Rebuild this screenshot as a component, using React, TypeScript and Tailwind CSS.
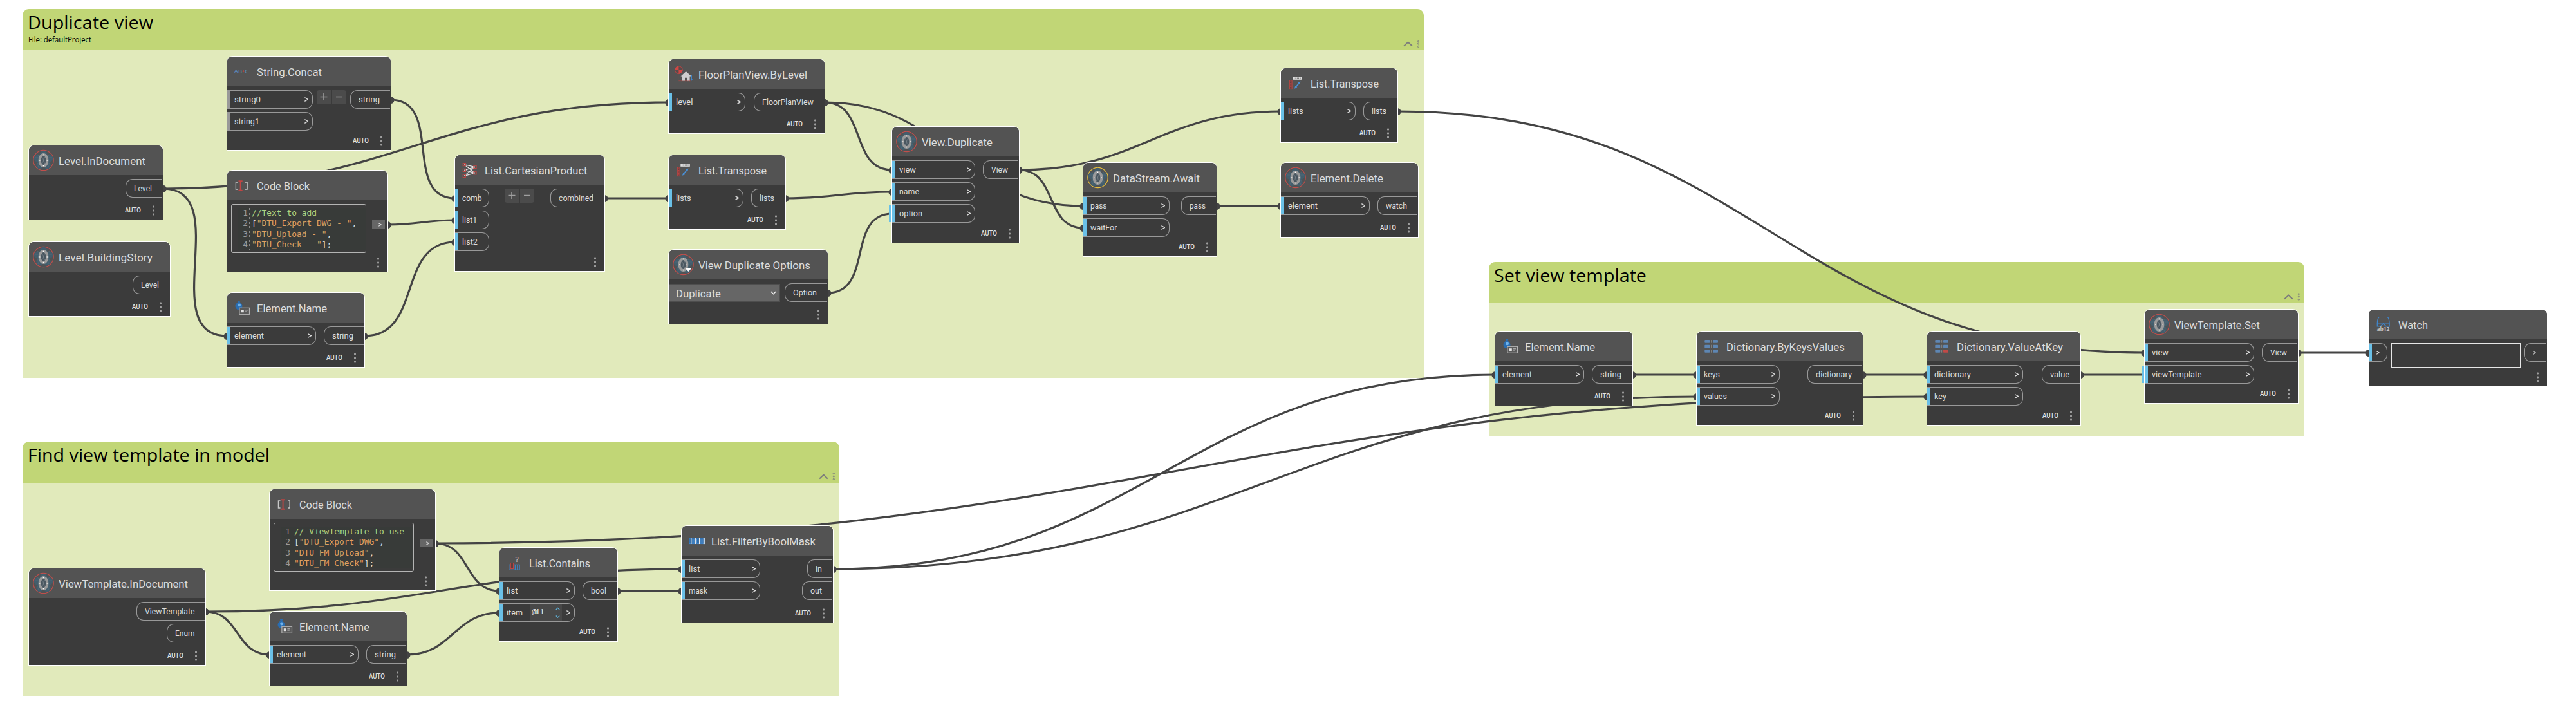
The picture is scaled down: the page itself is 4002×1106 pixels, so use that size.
import React, { useLayoutEffect, useRef, useState } from "react";

/** Single-line label stretched or squeezed to an exact width. */
function Fit({ w, className = "", children }: { w: number; className?: string; children: string }) {
  const ref = useRef<HTMLSpanElement>(null);
  const [scale, setScale] = useState(1);
  useLayoutEffect(() => {
    const el = ref.current;
    if (el && el.offsetWidth > 0) {
      const natural = el.getBoundingClientRect().width / scale;
      if (natural > 0) setScale(w / natural);
    }
  }, [w, children]);
  return (
    <span className={"block shrink-0 whitespace-nowrap " + className} style={{ width: w }}>
      <span ref={ref} className="inline-block origin-left whitespace-pre" style={{ transform: `scaleX(${scale})` }}>
        {children}
      </span>
    </span>
  );
}

/* ---------- icons ---------- */

type IconName =
  | "archi" | "archiYellow" | "archiDrop" | "abc" | "code" | "name" | "cartesian"
  | "floor" | "transpose" | "contains" | "filter" | "dict" | "dictKey" | "watch";

function Archi({ ring }: { ring: string }) {
  return (
    <>
      <circle cx="16.5" cy="16" r="15.7" fill="#505254" stroke={ring} strokeWidth="1.2" />
      {[0, 72, 144, 216, 288].map((a) => (
        <ellipse key={a} cx="16.5" cy="7.4" rx="5.8" ry="6.6" fill="#435e6d" transform={`rotate(${a} 16.5 16)`} />
      ))}
      <path d="M3 12h27M8 27l8-22 9 22M6 22l20-15M27 22L7 7" stroke="#5f7480" strokeWidth=".5" fill="none" />
      <ellipse cx="16.5" cy="16" rx="4" ry="7" fill="#4a5760" />
      <path d="M14 11q5 5 0 10M19 11q-5 5 0 10" stroke="#7f8a90" strokeWidth=".6" fill="none" />
      <ellipse cx="16.5" cy="16" rx="5.9" ry="9" fill="none" stroke="#9a9a9a" strokeWidth="4" />
      <circle cx="16.5" cy="7.4" r=".8" fill="#fff" />
      <circle cx="16.5" cy="24.6" r=".8" fill="#fff" />
      <circle cx="10.8" cy="16" r=".8" fill="#fff" />
      <circle cx="22.2" cy="16" r=".8" fill="#fff" />
    </>
  );
}

function Icon({ name }: { name: IconName }) {
  let body: React.ReactNode = null;
  switch (name) {
    case "archi":
      body = <Archi ring="#c14f4c" />;
      break;
    case "archiYellow":
      body = <Archi ring="#e8bf3e" />;
      break;
    case "archiDrop":
      body = (
        <>
          <Archi ring="#c14f4c" />
          <path d="M19 21h11l-5.5 6z" fill="#fff" />
        </>
      );
      break;
    case "abc":
      body = (
        <g fontFamily="'Open Sans', sans-serif" fontWeight="600" fontSize="9.5">
          <text x="4.8" y="19" textLength="12.2" lengthAdjust="spacingAndGlyphs" fill="#5a84b2">AB</text>
          <text x="21" y="19" textLength="6.5" lengthAdjust="spacingAndGlyphs" fill="#5a84b2">C</text>
          <path d="M17.4 15.6h3.4M19.1 13.9v3.4" stroke="#c04543" strokeWidth="1.2" />
        </g>
      );
      break;
    case "code":
      body = (
        <>
          <path d="M10.5 11H7.4v11h3.1M22 11h3.1v11H22" fill="none" stroke="#c9c9c9" strokeWidth="1.3" />
          <path d="M11.5 9.2h6.2M11.5 23.8h6.2M14.6 9.2v14.6" stroke="#c04543" strokeWidth="1.9" fill="none" />
        </>
      );
      break;
    case "name":
      body = (
        <>
          <path d="M9.8 5h4.6l-.8 1.6c.2 2 3.9 3.6 3.9 7 0 2.6-2 4.600-3.400 5.400h-4C8.600 18 6.500 16 6.500 13.400c0-3.200 3.600-4.600 4-6.800z" fill="#2a6db0" />
          <circle cx="12.6" cy="12" r="2.4" fill="#6fb2ea" />
          <rect x="12.9" y="16.3" width="15.6" height="10" fill="#5a5a5a" stroke="#b4b4b4" strokeWidth="1.2" />
          <rect x="15.8" y="19.2" width="4" height="4" fill="#e0e0e0" />
          <path d="M21.4 19.8h4.6M21.4 22h3.4" stroke="#d0d0d0" strokeWidth=".9" />
        </>
      );
      break;
    case "cartesian":
      body = (
        <>
          <path d="M8.3 7.7L25 11.3M8.3 7.7L25 20.7M8.3 16.3L25 11.3M8.3 16.3L25 20.7M8.3 25.3L25 11.3M8.3 25.3L25 20.7" stroke="#e2e2e2" strokeWidth="1.3" />
          <g fill="none" stroke="#c04543" strokeWidth="1">
            <rect x="6.2" y="5.5" width="4.2" height="4.2" />
            <rect x="6.2" y="14.3" width="4.2" height="4.2" />
            <rect x="6.2" y="23.2" width="4.2" height="4.2" />
            <rect x="22.9" y="9.3" width="4.2" height="4.2" />
            <rect x="22.9" y="18.7" width="4.2" height="4.2" />
          </g>
        </>
      );
      break;
    case "floor":
      body = (
        <>
          <circle cx="9.4" cy="9.7" r="5.9" fill="#5a4a4a" stroke="#c04543" strokeWidth="1" />
          <path d="M9.4 9.7V3.8A5.9 5.9 0 0 0 3.5 9.7zM9.4 9.7v5.9a5.9 5.9 0 0 0 5.9-5.9z" fill="#cf4744" />
          <path d="M8.6 16.5v10.2H28" fill="none" stroke="#c04543" strokeWidth="1" strokeDasharray="2 1" />
          <path d="M20.7 12l8.3 7.6h-2.4v6.8h-4v-4.600h-3.600v4.600h-4.200v-6.800h-2.300z" fill="#cfcfcf" />
          <path d="M29.3 17.5v7" stroke="#3f86cc" strokeWidth="1.3" />
          <path d="M27.3 23.5h4l-2 3.3z" fill="#3f86cc" />
        </>
      );
      break;
    case "transpose":
      body = (
        <>
          <rect x="12.3" y="6.3" width="14.5" height="4.5" fill="#dedede" />
          <path d="M14.7 7.5v2.1M17 7.5v2.1M19.3 7.5v2.1M21.6 7.5v2.1M24 7.5v2.1" stroke="#555" strokeWidth=".8" />
          <rect x="7.3" y="11.8" width="3.8" height="13.8" fill="#6a4040" stroke="#c04543" strokeWidth="1" />
          <path d="M8.3 14h2M8.3 16.500h2M8.3 19h2M8.3 21.500h2M8.3 23.800h2" stroke="#c04543" strokeWidth=".9" />
          <path d="M16.3 23.2L23 15" stroke="#4a8fd4" strokeWidth="1.8" />
          <path d="M24.4 13.6l-4.3 1.6 3.2 2.7zM15 24.7l4.4-1.7-3.2-2.7z" fill="#4a8fd4" />
        </>
      );
      break;
    case "contains":
      body = (
        <>
          <text x="18.4" y="14.6" fontFamily="Roboto, sans-serif" fontSize="11" fill="#cfcfcf">?</text>
          <path d="M8.8 19.3h16.3v8H8.8zM18.3 19v8.5M21.8 19v8.5" fill="none" stroke="#3f86cc" strokeWidth="1.2" />
          <rect x="11.3" y="16.5" width="4.3" height="9" fill="#5c4040" stroke="#c04543" strokeWidth="1.1" />
        </>
      );
      break;
    case "filter":
      body = (
        <>
          <rect x="5.8" y="11.8" width="23.6" height="8.8" fill="#2f6aa5" stroke="#3f86cc" strokeWidth="1" />
          <path d="M8.7 11.3v9.8M15.2 11.3v9.8M21.7 11.3v9.8" stroke="#e8e8e8" strokeWidth="1.5" />
          <rect x="27.8" y="11.3" width="1.9" height="9.8" fill="#f2f2f2" />
          <path d="M11 13v6M13 13v6M17.5 13v6M19.5 13v6M24 13v6M26 13v6" stroke="#5ba0e2" strokeWidth=".8" />
        </>
      );
      break;
    case "dict":
    case "dictKey":
      body = (
        <>
          {[6, 13.7, 21].map((y) => (
            <g key={y}>
              <rect x="6.3" y={y} width="8" height="4.7" rx="1" fill="#5e86b3" />
              <rect x="16.2" y={y} width="1" height="4.7" fill="#8a8a8a" />
              <rect x="19" y={y} width="8" height="4.7" rx="1" fill={name === "dictKey" && y === 21 ? "#c04a47" : "#5e86b3"} />
            </g>
          ))}
        </>
      );
      break;
    case "watch":
      body = (
        <>
          <path d="M10.2 4.5q-2.600 1.600-2.900 9.300h18.800q-.4-7.700-3-9.300M7.3 13.8v5h5.200l1.600-1.600 2.600-2.200 2.600 2.200 1.600 1.600h5.200v-5" fill="none" stroke="#3f86cc" strokeWidth="1.3" />
          <text x="6.4" y="26.4" textLength="20" lengthAdjust="spacingAndGlyphs" fontFamily="'Open Sans', sans-serif" fontWeight="700" fontSize="8.5" fill="#c4c4c4">ab12</text>
        </>
      );
      break;
  }
  return (
    <svg className="h-8 w-[33px] shrink-0 overflow-visible" viewBox="0 0 33 32">
      {body}
    </svg>
  );
}

/* ---------- node parts ---------- */

type Port = { label: string; w: number; tab?: boolean; idle?: boolean; spinner?: boolean };
type Out = { label: string; left: number };
type NodeData = {
  x: number; y: number; w: number; h: number;
  icon: IconName; title: string; tw: number;
  inW?: number; ins?: Port[]; outs?: Out[];
  auto?: boolean; plus?: number; arrows?: boolean; plain?: boolean;
  code?: { w: number; lines: { t: string; c: "g" | "o" | "w" }[][] };
  select?: boolean; watch?: boolean;
};

const Arrow = ({ small }: { small?: boolean }) => (
  <svg className={small ? "h-[6px] w-[5px]" : "h-[7px] w-[6px]"} viewBox="0 0 6 7">
    <path d="M.3.7L5.3 3.5.3 6.3" fill="none" stroke="#dcdcdc" strokeWidth="1.4" />
  </svg>
);

function InPort({ p, w, arrow }: { p: Port; w: number; arrow: boolean }) {
  return (
    <div
      className="relative flex h-[29px] items-center rounded-r-[11px] border-y border-r border-[#999999]"
      style={{ width: w }}
    >
      <div className={"h-[27px] w-[5px] shrink-0 " + (p.idle ? "bg-[#999999]" : "bg-[#6ac0e7]")} />
      {p.tab && <div className="absolute -left-[5px] top-0 h-[27px] w-1 bg-[#6ac0e7]" />}
      {p.label !== "" && (
        <Fit w={p.w} className="ml-[6px] text-[13px] leading-[16px] text-[#dcdcdc]">{p.label}</Fit>
      )}
      {p.spinner && (
        <div className="ml-[11px] flex h-[25px] w-[50px] items-center bg-[#484848]">
          <Fit w={19} className="ml-[3px] pb-[2px] text-[11px] font-medium leading-[14px] text-[#f0f0f0]">@L1</Fit>
          <div className="ml-auto h-6 w-px bg-[#777777]" />
          <svg className="h-6 w-3" viewBox="0 0 12 24">
            <path d="M2.8 7l2.700-2.700L8.200 7M2.800 16.500l2.700 2.700 2.700-2.700" fill="none" stroke="#5fb4dc" strokeWidth="1.2" />
          </svg>
        </div>
      )}
      {arrow && (
        <div className={p.label === "" ? "ml-[7px]" : "ml-auto mr-[6px]"}>
          <Arrow small={p.label === ""} />
        </div>
      )}
    </div>
  );
}

function OutPort({ o, w }: { o: Out; w: number }) {
  return (
    <div
      className="flex h-[29px] items-center self-end rounded-l-[11px] border-y border-l border-[#999999] pl-[12px]"
      style={{ width: w - o.left - 1 }}
    >
      {o.label === ">" ? (
        <div className="ml-[1px]"><Arrow small /></div>
      ) : (
        <Fit w={w - o.left - 30} className="text-[13px] leading-[16px] text-[#dcdcdc]">{o.label}</Fit>
      )}
    </div>
  );
}

function Code({ code }: { code: NonNullable<NodeData["code"]> }) {
  return (
    <div className="ml-[6px] flex">
      <div
        className="flex h-[76px] rounded-[3px] border border-[#b4b4b4] pl-[10px] pt-[5px] font-['DejaVu_Sans_Mono',monospace] text-[12.92px] leading-[16.3px]"
        style={{ width: code.w }}
      >
        <div className="flex h-[65px] grow bg-[#383b39]">
          <div className="w-[18px] border-r border-dotted border-[#8a8a8a] pr-[2px] text-right text-[#999999]">
            {code.lines.map((_, i) => (
              <div key={i}>{i + 1}</div>
            ))}
          </div>
          <div className="whitespace-pre pl-[3px]">
            {code.lines.map((l, i) => (
              <div key={i}>
                {l.map((s, j) => (
                  <span key={j} className={s.c === "g" ? "text-[#aed581]" : s.c === "o" ? "text-[#e0a060]" : "text-[#dcdcdc]"}>
                    {s.t}
                  </span>
                ))}
              </div>
            ))}
          </div>
        </div>
      </div>
      <div className="ml-[9px] mt-[25px] flex h-[13px] w-5 items-center justify-end bg-[#666666] pr-[5px]">
        <Arrow small />
      </div>
    </div>
  );
}

function Node({ n }: { n: NodeData }) {
  return (
    <div
      className={
        "absolute flex flex-col rounded-t-[8px] bg-[#3b3b3b] " + (n.plain ? "" : "shadow-[0_0_0_1px_#ffffff]")
      }
      style={{ left: n.x, top: n.y, width: n.w, height: n.h }}
    >
      <div className="flex h-[46px] shrink-0 items-center rounded-t-[8px] bg-[#535353] pl-[6px]">
        <Icon name={n.icon} />
        <Fit w={n.tw} className="ml-[7px] pt-[3px] text-[16px] leading-[20px] text-[#dcdcdc]">{n.title}</Fit>
      </div>
      <div className="mt-[6px] flex grow">
        {n.ins && (
          <div className="flex flex-col gap-[5px]">
            {n.ins.map((p) => (
              <InPort key={p.label} p={p} w={n.inW ?? 0} arrow={n.arrows !== false} />
            ))}
          </div>
        )}
        {n.code && <Code code={n.code} />}
        {n.select && (
          <div className="mt-[1px] flex h-7 w-[173px] items-center border-y border-r border-[#4e4e4e] bg-[#666666] pl-[11px] pr-[5px]">
            <Fit w={70} className="pt-[3px] text-[16px] leading-[20px] text-[#dcdcdc]">Duplicate</Fit>
            <svg className="ml-auto h-[6px] w-[9px]" viewBox="0 0 9 6">
              <path d="M.8 1l3.700 3.700L8.200 1" fill="none" stroke="#f0f0f0" strokeWidth="1.5" />
            </svg>
          </div>
        )}
        {n.plus !== undefined && (
          <div className="flex h-[22px] gap-[2px]" style={{ marginLeft: n.plus - (n.inW ?? 0) }}>
            <svg className="h-[22px] w-[22px] rounded-l-[4px] bg-[#4b4b4b]" viewBox="0 0 22 22">
              <path d="M5.5 10.5h11M11 5v11" stroke="#a0a0a0" strokeWidth="1.5" />
            </svg>
            <svg className="h-[22px] w-[22px] rounded-r-[4px] bg-[#4b4b4b]" viewBox="0 0 22 22">
              <path d="M6 10.5h9" stroke="#a0a0a0" strokeWidth="1.5" />
            </svg>
          </div>
        )}
        {n.watch && <div className="ml-[6px] h-[38px] w-[201px] border border-[#e6e6e6]" />}
        {n.outs && (
          <div className="ml-auto mr-px flex flex-col gap-[5px]">
            {n.outs.map((o) => (
              <OutPort key={o.label} o={o} w={n.w} />
            ))}
          </div>
        )}
      </div>
      <div className="mb-[6px] flex h-4 shrink-0 items-center justify-end pr-[13px]">
        {n.auto !== false && <Fit w={25} className="mr-[18px] text-[10.5px] font-medium leading-[14px] text-[#e2e2e2]">AUTO</Fit>}
        <svg className="h-4 w-[3px]" viewBox="0 0 3 16">
          <rect x="0" y=".5" width="3" height="3" rx="1" fill="#a0a0a0" />
          <rect x="0" y="6.5" width="3" height="3" rx="1" fill="#a0a0a0" />
          <rect x="0" y="12.5" width="3" height="3" rx="1" fill="#a0a0a0" />
        </svg>
      </div>
    </div>
  );
}

/* ---------- graph data ---------- */

const elementName = (x: number, y: number): NodeData => ({
  x, y, w: 213, h: 115, icon: "name", title: "Element.Name", tw: 109,
  inW: 138, ins: [{ label: "element", w: 46 }], outs: [{ label: "string", left: 150 }],
});

const transpose = (x: number, y: number): NodeData => ({
  x, y, w: 181, h: 115, icon: "transpose", title: "List.Transpose", tw: 106,
  inW: 116, ins: [{ label: "lists", w: 23.5 }], outs: [{ label: "lists", left: 128 }],
});

const nodes: NodeData[] = [
  { x: 45, y: 226, w: 208, h: 115, icon: "archi", title: "Level.InDocument", tw: 135, outs: [{ label: "Level", left: 150 }] },
  { x: 45, y: 376, w: 219, h: 115, icon: "archi", title: "Level.BuildingStory", tw: 146, outs: [{ label: "Level", left: 161 }] },
  {
    x: 353, y: 88, w: 254, h: 145, icon: "abc", title: "String.Concat", tw: 101, inW: 133, plus: 139,
    ins: [{ label: "string0", w: 41, idle: true }, { label: "string1", w: 39, idle: true }],
    outs: [{ label: "string", left: 191 }],
  },
  {
    x: 353, y: 265, w: 249, h: 157, icon: "code", title: "Code Block", tw: 82, auto: false,
    code: {
      w: 210,
      lines: [
        [{ t: "//Text to add", c: "g" }],
        [{ t: "[", c: "w" }, { t: '"DTU_Export DWG - "', c: "o" }, { t: ",", c: "w" }],
        [{ t: '"DTU_Upload - "', c: "o" }, { t: ",", c: "w" }],
        [{ t: '"DTU_Check - "', c: "o" }, { t: "];", c: "w" }],
      ],
    },
  },
  elementName(353, 455),
  {
    x: 707, y: 241, w: 232, h: 180, icon: "cartesian", title: "List.CartesianProduct", tw: 159.5, auto: false,
    inW: 53, plus: 77, arrows: false,
    ins: [{ label: "comb", w: 30.5 }, { label: "list1", w: 23 }, { label: "list2", w: 24 }],
    outs: [{ label: "combined", left: 148 }],
  },
  {
    x: 1039, y: 92, w: 242, h: 115, icon: "floor", title: "FloorPlanView.ByLevel", tw: 169, inW: 119,
    ins: [{ label: "level", w: 26.5 }], outs: [{ label: "FloorPlanView", left: 132 }],
  },
  transpose(1039, 241),
  {
    x: 1039, y: 388, w: 247, h: 115, icon: "archiDrop", title: "View Duplicate Options", tw: 174, auto: false,
    select: true, outs: [{ label: "Option", left: 180 }],
  },
  {
    x: 1386, y: 197, w: 197, h: 180, icon: "archi", title: "View.Duplicate", tw: 110, inW: 129,
    ins: [{ label: "view", w: 26 }, { label: "name", w: 31 }, { label: "option", w: 36, tab: true }],
    outs: [{ label: "View", left: 141 }],
  },
  {
    x: 1683, y: 253, w: 207, h: 145, icon: "archiYellow", title: "DataStream.Await", tw: 135, inW: 134,
    ins: [{ label: "pass", w: 25.5 }, { label: "waitFor", w: 41.5 }], outs: [{ label: "pass", left: 152 }],
  },
  transpose(1990, 106),
  {
    x: 1990, y: 253, w: 213, h: 115, icon: "archi", title: "Element.Delete", tw: 113, inW: 138,
    ins: [{ label: "element", w: 46 }], outs: [{ label: "watch", left: 150 }],
  },
  {
    x: 45, y: 883, w: 274, h: 150, icon: "archi", title: "ViewTemplate.InDocument", tw: 201,
    outs: [{ label: "ViewTemplate", left: 166.5 }, { label: "Enum", left: 213.5 }],
  },
  {
    x: 419, y: 760, w: 257, h: 157, icon: "code", title: "Code Block", tw: 82, auto: false,
    code: {
      w: 218,
      lines: [
        [{ t: "// ViewTemplate to use", c: "g" }],
        [{ t: "[", c: "w" }, { t: '"DTU_Export DWG"', c: "o" }, { t: ",", c: "w" }],
        [{ t: '"DTU_FM Upload"', c: "o" }, { t: ",", c: "w" }],
        [{ t: '"DTU_FM Check"', c: "o" }, { t: "];", c: "w" }],
      ],
    },
  },
  elementName(419, 950),
  {
    x: 776, y: 851, w: 183, h: 145, icon: "contains", title: "List.Contains", tw: 95, inW: 117,
    ins: [{ label: "list", w: 17.5 }, { label: "item", w: 25, spinner: true }], outs: [{ label: "bool", left: 129 }],
  },
  {
    x: 1059, y: 817, w: 235, h: 150, icon: "filter", title: "List.FilterByBoolMask", tw: 162, inW: 122,
    ins: [{ label: "list", w: 17.5 }, { label: "mask", w: 29 }], outs: [{ label: "in", left: 195 }, { label: "out", left: 187 }],
  },
  elementName(2323, 515),
  {
    x: 2636, y: 515, w: 258, h: 145, icon: "dict", title: "Dictionary.ByKeysValues", tw: 184, inW: 129,
    ins: [{ label: "keys", w: 25 }, { label: "values", w: 36 }], outs: [{ label: "dictionary", left: 172 }],
  },
  {
    x: 2994, y: 515, w: 238, h: 145, icon: "dictKey", title: "Dictionary.ValueAtKey", tw: 165, inW: 149,
    ins: [{ label: "dictionary", w: 57 }, { label: "key", w: 19 }], outs: [{ label: "value", left: 178 }],
  },
  {
    x: 3332, y: 481, w: 238, h: 145, icon: "archi", title: "ViewTemplate.Set", tw: 133, inW: 170,
    ins: [{ label: "view", w: 26 }, { label: "viewTemplate", w: 77.5, tab: true }], outs: [{ label: "View", left: 182 }],
  },
  {
    x: 3680, y: 481, w: 277, h: 119, icon: "watch", title: "Watch", tw: 46, auto: false, plain: true, watch: true,
    inW: 29, ins: [{ label: "", w: 0 }], outs: [{ label: ">", left: 241 }],
  },
];

/* x1, y1, x2, y2 and whether the far end attaches to a tab rather than a pin */
const wires: [number, number, number, number, boolean?][] = [
  [253, 293, 1039, 159],
  [253, 293, 353, 522],
  [607, 155, 707, 308],
  [602, 349, 707, 342],
  [566, 522, 707, 376],
  [939, 308, 1039, 308],
  [1281, 159, 1386, 264],
  [1281, 159, 1683, 320],
  [1220, 308, 1386, 298],
  [1286, 455, 1386, 332, true],
  [1583, 264, 1990, 173],
  [1583, 264, 1683, 354],
  [1890, 320, 1990, 320],
  [2171, 173, 3332, 548],
  [319, 950, 419, 1017],
  [319, 950, 1059, 884],
  [676, 844, 776, 918],
  [676, 844, 2994, 616],
  [632, 1017, 776, 952],
  [959, 918, 1059, 918],
  [1294, 884, 2323, 582],
  [1294, 884, 2636, 616],
  [2536, 582, 2636, 582],
  [2894, 582, 2994, 582],
  [3232, 582, 3332, 582, true],
  [3570, 548, 3680, 548],
];

function Wires() {
  return (
    <svg className="absolute inset-0 h-[1106px] w-[4002px]" viewBox="0 0 4002 1106">
      {wires.map(([x1, y1, x2, y2, tab], i) => {
        const o = 0.45 * Math.hypot(x2 - x1, y2 - y1);
        return (
          <g key={i}>
            <path
              d={`M${x1} ${y1}C${x1 + o} ${y1} ${x2 - o} ${y2} ${x2} ${y2}`}
              fill="none"
              stroke="#444444"
              strokeWidth="3.2"
            />
            <circle cx={x1} cy={y1 + 0.5} r="5.5" fill="#444444" />
            {!tab && <circle cx={x2} cy={y2 + 0.5} r="5.5" fill="#444444" />}
          </g>
        );
      })}
    </svg>
  );
}

const groups = [
  { x: 35, y: 14, w: 2177, h: 573, title: "Duplicate view", tw: 192, sub: "File: defaultProject" },
  { x: 35, y: 686, w: 1269, h: 395, title: "Find view template in model", tw: 373, sub: "" },
  { x: 2313, y: 407, w: 1267, h: 270, title: "Set view template", tw: 234, sub: "" },
];

export default function App() {
  return (
    <div className="relative h-[1106px] w-[4002px] overflow-hidden bg-white font-[Roboto,sans-serif]">
      {groups.map((g) => (
        <div
          key={g.title}
          className="absolute flex flex-col overflow-hidden rounded-t-[10px] bg-[#e1eabb] font-['Open_Sans',sans-serif] text-black"
          style={{ left: g.x, top: g.y, width: g.w, height: g.h }}
        >
          <div className="flex h-16 shrink-0 items-end justify-between bg-[#c1d676]">
            <div className="flex flex-col self-start pl-[8px] pt-px">
              <Fit w={g.tw + 3} className="h-[38px] text-[28px] leading-[38px]">{g.title}</Fit>
              {g.sub !== "" && <Fit w={98} className="ml-px text-[12px] leading-[17px]">{g.sub}</Fit>}
            </div>
            <svg className="mb-1 mr-[5px] h-3 w-[27px]" viewBox="0 0 27 12">
              <path d="M1.2 9.5L7.5 3.6 13.8 9.5" fill="none" stroke="#7c7c7c" strokeWidth="2" />
              <g fill="none" stroke="#7c7c7c" strokeWidth=".9">
                <circle cx="23.3" cy="1.7" r="1.1" />
                <circle cx="23.3" cy="6" r="1.1" />
                <circle cx="23.3" cy="10.3" r="1.1" />
              </g>
            </svg>
          </div>
        </div>
      ))}
      <Wires />
      {nodes.map((n, i) => (
        <Node key={i} n={n} />
      ))}
    </div>
  );
}
